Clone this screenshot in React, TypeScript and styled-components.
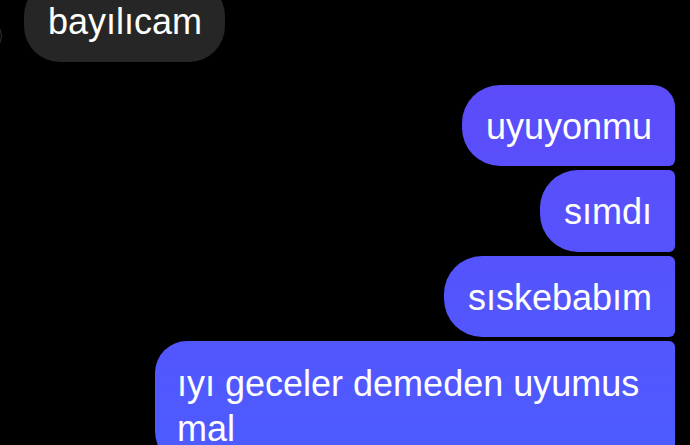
import React from "react";
import styled, { createGlobalStyle } from "styled-components";

const Global = createGlobalStyle`
  html, body {
    margin: 0;
    padding: 0;
    background: #000;
    overflow: hidden;
  }
  body {
    font-family: "Liberation Sans", Arial, sans-serif;
  }
`;

const Screen = styled.div`
  width: 690px;
  height: 445px;
  background: #000;
  overflow: hidden;
  display: flex;
  flex-direction: column;
`;

const IncomingRow = styled.div`
  display: flex;
  align-items: flex-start;
  gap: 22px;
  margin-top: -20px;
  margin-left: -30px;
`;

const Avatar = styled.div`
  width: 32px;
  height: 32px;
  margin-top: 40px;
  border-radius: 50%;
  background: #050505;
  border: 1px solid #2e2e2e;
  box-sizing: border-box;
  flex-shrink: 0;
`;

const Bubble = styled.div<{ $out?: boolean; $first?: boolean; $last?: boolean }>`
  box-sizing: border-box;
  max-width: 520px;
  padding: 20px 23px 17.5px 24px;
  font-size: 36px;
  line-height: 44px;
  color: #fff;
  background: ${(p) =>
    p.$out
      ? "linear-gradient(to bottom, #6246f7 0px, #5c4cfa 90px, #5653fc 250px, #4d5bff 445px) fixed"
      : "#262626"};
  border-radius: ${(p) =>
    p.$out
      ? `38px ${p.$first ? "22px" : "6px"} ${p.$last ? "22px" : "6px"} 38px`
      : "36px"};
`;

const Outgoing = styled.div`
  display: flex;
  flex-direction: column;
  align-items: flex-end;
  gap: 4px;
  margin-top: 23px;
  padding-right: 15px;
`;

const LongBubble = styled(Bubble)`
  line-height: 45px;
  padding-left: 22px;
  border-top-left-radius: 32px;
`;

export default function App() {
  return (
    <>
      <Global />
      <Screen>
        <IncomingRow>
          <Avatar />
          <Bubble>bayılıcam</Bubble>
        </IncomingRow>
        <Outgoing>
          <Bubble $out $first>uyuyonmu</Bubble>
          <Bubble $out>sımdı</Bubble>
          <Bubble $out>sıskebabım</Bubble>
          <LongBubble $out>ıyı geceler demeden uyumus mal</LongBubble>
        </Outgoing>
      </Screen>
    </>
  );
}
